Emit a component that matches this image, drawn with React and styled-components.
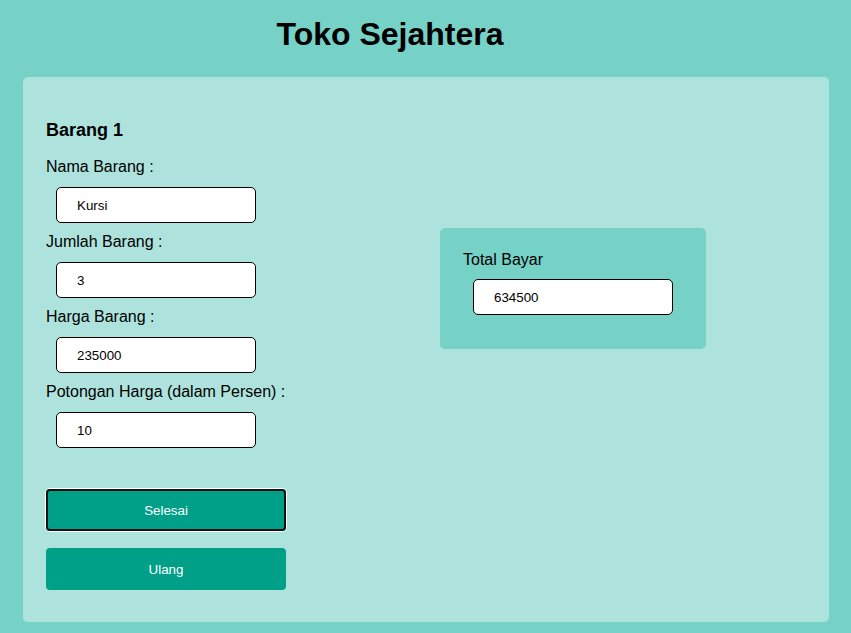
import styled, { createGlobalStyle } from "styled-components";
import { useState } from "react";

const GlobalStyle = createGlobalStyle`
  body {
    margin: 0;
    background: #76d1c6;
    font-family: "Liberation Sans", Arial, sans-serif;
    color: #000;
  }
`;

export default function App() {
    const [nama, setNama] = useState("Kursi");
    const [jumlah, setJumlah] = useState("3");
    const [harga, setHarga] = useState("235000");
    const [potongan, setPotongan] = useState("10");

    const total = Math.round(Number(jumlah) * Number(harga) * (1 - Number(potongan) / 100));

    const onReset = () => {
        setNama("");
        setJumlah("");
        setHarga("");
        setPotongan("");
    };

    return (
        <Page>
            <GlobalStyle/>
            <Title>Toko Sejahtera</Title>
            <Card>
                <FormColumn>
                    <Heading>Barang 1</Heading>
                    <Label>Nama Barang :</Label>
                    <Input value={nama} onChange={(e) => setNama(e.target.value)}/>
                    <Label>Jumlah Barang :</Label>
                    <Input value={jumlah} onChange={(e) => setJumlah(e.target.value)}/>
                    <Label>Harga Barang :</Label>
                    <Input value={harga} onChange={(e) => setHarga(e.target.value)}/>
                    <Label>Potongan Harga (dalam Persen) :</Label>
                    <Input value={potongan} onChange={(e) => setPotongan(e.target.value)}/>
                    <Button $focused type="button">Selesai</Button>
                    <Button type="button" onClick={onReset}>Ulang</Button>
                </FormColumn>
                <TotalBox>
                    <Label>Total Bayar</Label>
                    <Input readOnly value={isNaN(total) ? "" : total}/>
                </TotalBox>
            </Card>
        </Page>
    );
}

const Page = styled.main`
  padding: 16px 22px 11px 23px;
`;

const Title = styled.h1`
  width: 734px;
  margin: 0 0 24px;
  font-size: 32px;
  font-weight: bold;
  text-align: center;
  line-height: 37px;
`;

const Card = styled.section`
  display: flex;
  background: #aee3dd;
  border-radius: 5px;
  padding: 43px 23px 32px;
`;

const FormColumn = styled.div`
  flex: 0 0 394px;
  display: flex;
  flex-direction: column;
  align-items: flex-start;
`;

const Heading = styled.h3`
  margin: 0 0 17px;
  font-size: 18px;
  line-height: 21px;
  font-weight: bold;
`;

const Label = styled.label`
  font-size: 16px;
  line-height: 18px;
  margin-bottom: 11px;
`;

const Input = styled.input`
  box-sizing: border-box;
  width: 200px;
  height: 36px;
  margin: 0 0 10px 10px;
  padding: 0 20px;
  border: 1px solid #000;
  border-radius: 5px;
  background: #fff;
  font-family: "Liberation Sans", Arial, sans-serif;
  font-size: 13.33px;
  color: #000;
  outline: none;
`;

const Button = styled.button`
  width: 240px;
  height: 42px;
  margin-top: ${(p) => (p.$focused ? "31px" : "17px")};
  border: none;
  border-radius: 4px;
  background: #00a088;
  color: #fff;
  font-family: "Liberation Sans", Arial, sans-serif;
  font-size: 13.33px;
  cursor: pointer;
  box-shadow: ${(p) => (p.$focused ? "inset 0 0 0 2px #111, 0 0 0 1px #fff" : "none")};
`;

const TotalBox = styled.div`
  flex: 0 0 266px;
  box-sizing: border-box;
  align-self: flex-start;
  display: flex;
  flex-direction: column;
  align-items: flex-start;
  margin-top: 108px;
  padding: 23px 23px 24px;
  background: #76d1c6;
  border-radius: 5px;

  ${Label} {
    margin-bottom: 10px;
  }
`;
